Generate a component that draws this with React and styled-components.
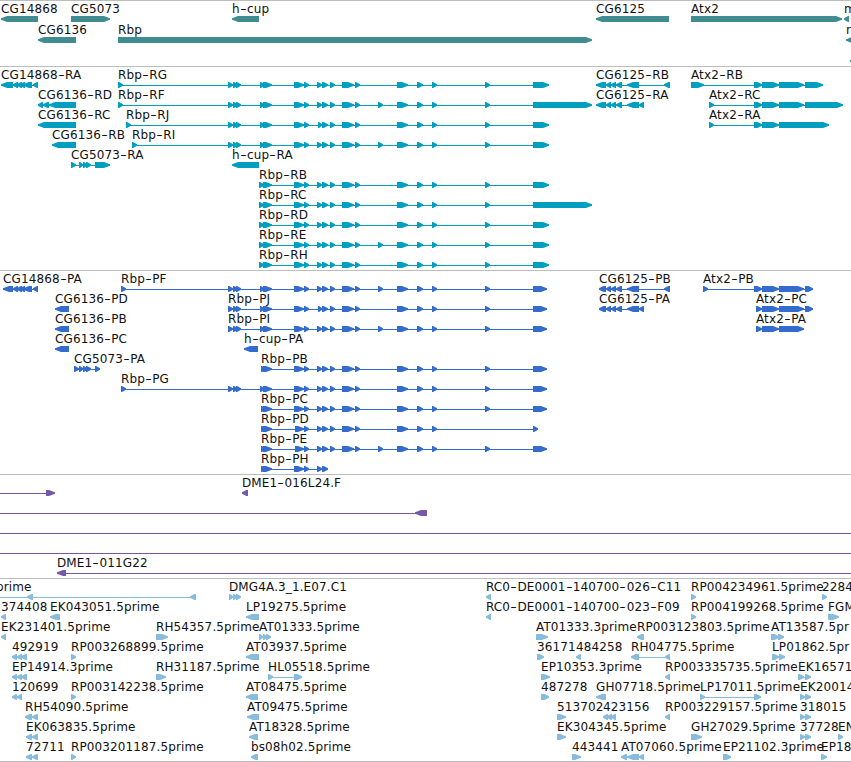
import React from "react";
import styled, { createGlobalStyle } from "styled-components";

const GlobalStyle = createGlobalStyle`
  html, body { margin: 0; padding: 0; background: #fff; overflow: hidden; }
`;

const Browser = styled.main`
  display: flex;
  flex-direction: column;
  width: 851px;
  height: 762px;
  overflow: hidden;
  background: #fff;
  color: #000;
  font-family: "DejaVu Sans", sans-serif;
  font-size: 12px;
  letter-spacing: 0.12px;
`;

const Track = styled.section`
  display: flex;
  flex-direction: column;
  flex: none;
  border-top: 1px solid #bdbdbd;
  padding: 1px 0 ${(p) => p.$end}px;
  color: ${(p) => p.$color};
`;

const Row = styled.div`
  position: relative;
  height: ${(p) => p.$pitch}px;
`;

const Label = styled.span`
  position: absolute;
  z-index: 1;
  top: 0;
  left: ${(p) => p.$x}px;
  line-height: 14px;
  white-space: pre;
  color: #111;
`;

const Dash = styled.span`
  display: inline-block;
  width: 7.3px;
  text-align: center;
  transform: scaleX(1.5);
`;

const Features = styled.svg`
  display: block;
  width: 851px;
  height: 6px;
  padding-top: 14px;
  overflow: visible;
  fill: currentColor;
`;

const Connector = styled.rect`
  shape-rendering: crispEdges;
`;

const Bottom = styled.div`
  height: 1px;
  background: #bdbdbd;
`;

// A feature is [direction, [start, end], [start, end], ...]; a connector joins its exons.
const R = (...exons) => ["R", ...exons];
const L = (...exons) => ["L", ...exons];
const LINE = (a, b) => ["-", [a, b]];

function exonPath([a, b], dir) {
  const width = b - a;
  const tip = width < 9 ? Math.min(width - 1, 4.5) : 6;
  const step = dir === "R" ? 1 : -1;
  const base = dir === "R" ? a : b;
  const point = dir === "R" ? b : a;
  const s = point - step * tip;
  const shoulder = point - step * (tip / 2 - 0.3);
  return `M${base} 0H${s}L${shoulder} 1.2L${point} 2.3V3.7L${shoulder} 4.8L${s} 6H${base}Z`;
}

function Feature({ data }) {
  const [dir, ...exons] = data;
  const from = exons[0][0];
  const to = exons[exons.length - 1][1];
  return (
    <g>
      {(exons.length > 1 || dir === "-") && (
        <Connector x={from} y="3" width={to - from} height="1" />
      )}
      {dir !== "-" && exons.map((e, i) => <path key={i} d={exonPath(e, dir)} />)}
    </g>
  );
}

function LabelText({ text }) {
  return text
    .split(/(-)/)
    .map((part, i) => (part === "-" ? <Dash key={i}>-</Dash> : part));
}

const row = (labels, ...features) => ({ labels, features });

// Rbp exon structure, shared by its transcripts and proteins
const head = [[228, 233], [233, 238], [236, 241]];
const rbp = ({ start = [], second = [260, 264], third = 294, fifth = 317, extra, end, skip }) =>
  R(
    ...start, second, [263, 272], [third, 304], [304, 309], [fifth, 322], [322, 328],
    [330, 335], [342, 354], [355, 360], ...(extra ? [[378, 383]] : []),
    [397, 408], [417, 423], [432, 437], ...(skip ? [] : [[485, 490]]), [533, end]
  );

const cg14868 = (s) => L([s, 13], [13, 18], [17, 22], [20, 25], [23, 32], [33, 38]);
const cg6125 = (s, last) => L([s, 606], [606, 611], [611, 616], [616, 622], [627, 639], last);
const triple = (x) => R([x, x + 4], [x + 4, x + 8], [x + 7, x + 12]);

const genes = [
  row([[1, "CG14868"], [71, "CG5073"], [232, "h-cup"], [596, "CG6125"], [691, "Atx2"], [844, "m"]],
    L([1, 38]), R([71, 110]), L([232, 259]), L([596, 669]), R([691, 842]), L([844, 849])),
  row([[38, "CG6136"], [118, "Rbp"], [846, "r"]], L([38, 76]), R([118, 592]), L([846, 856])),
  row([], L([850, 858])),
];

const transcripts = [
  row([[1, "CG14868-RA"], [118, "Rbp-RG"], [596, "CG6125-RB"], [691, "Atx2-RB"]],
    cg14868(1), rbp({ start: [[118, 123], ...head], end: 549 }), cg6125(596, [664, 670]),
    R([691, 704], [754, 762], [762, 779], [779, 804], [805, 823])),
  row([[38, "CG6136-RD"], [118, "Rbp-RF"], [596, "CG6125-RA"], [709, "Atx2-RC"]],
    L([38, 43], [43, 49], [49, 76]), rbp({ start: [[118, 123], ...head], extra: true, end: 592 }),
    cg6125(596, [639, 644]), R([709, 714], [754, 762], [762, 779], [779, 804], [805, 843])),
  row([[38, "CG6136-RC"], [126, "Rbp-RJ"], [709, "Atx2-RA"]],
    L([38, 76]), rbp({ start: [[126, 131], ...head], fifth: 318, end: 549 }),
    R([709, 714], [754, 762], [762, 779], [779, 829])),
  row([[52, "CG6136-RB"], [132, "Rbp-RI"]],
    L([52, 76]), rbp({ start: [[132, 137], ...head], extra: true, end: 549 })),
  row([[71, "CG5073-RA"], [232, "h-cup-RA"]],
    R([71, 76], [79, 83], [83, 87], [86, 91], [95, 110]), L([232, 259])),
  row([[259, "Rbp-RB"]], rbp({ second: [259, 264], end: 549 })),
  row([[259, "Rbp-RC"]], rbp({ second: [259, 264], end: 592 })),
  row([[259, "Rbp-RD"]], rbp({ second: [259, 264], end: 549 })),
  row([[259, "Rbp-RE"]], rbp({ second: [259, 264], extra: true, end: 549 })),
  row([[259, "Rbp-RH"]], rbp({ second: [259, 264], end: 549 })),
];

const proteins = [
  row([[3, "CG14868-PA"], [121, "Rbp-PF"], [599, "CG6125-PB"], [703, "Atx2-PB"]],
    cg14868(3), rbp({ start: [[121, 126], ...head], extra: true, end: 547 }), cg6125(599, [664, 670]),
    R([703, 708], [754, 762], [762, 779], [779, 804], [805, 813])),
  row([[55, "CG6136-PD"], [228, "Rbp-PJ"], [599, "CG6125-PA"], [756, "Atx2-PC"]],
    L([55, 69]), rbp({ start: head, fifth: 318, end: 547 }), cg6125(599, [639, 644]),
    R([756, 762], [762, 779], [779, 804], [805, 813])),
  row([[55, "CG6136-PB"], [228, "Rbp-PI"], [756, "Atx2-PA"]],
    L([55, 69]), rbp({ start: head, extra: true, end: 547 }), R([756, 762], [762, 779], [779, 804])),
  row([[55, "CG6136-PC"], [244, "h-cup-PA"]], L([55, 69]), L([244, 258])),
  row([[74, "CG5073-PA"], [261, "Rbp-PB"]],
    R([74, 79], [79, 83], [83, 87], [86, 91], [95, 100]), rbp({ second: [261, 266], end: 547 })),
  row([[121, "Rbp-PG"]], rbp({ start: [[121, 126], ...head], end: 547 })),
  row([[261, "Rbp-PC"]], rbp({ second: [261, 266], end: 547 })),
  row([[261, "Rbp-PD"]], rbp({ second: [261, 266], third: 295, end: 538, skip: true })),
  row([[261, "Rbp-PE"]], rbp({ second: [261, 266], third: 295, extra: true, end: 547 })),
  row([[261, "Rbp-PH"]], R([261, 266], [263, 272], [294, 304], [304, 309], [317, 322], [322, 328])),
];

const clones = [
  row([[242, "DME1-016L24.F"]], LINE(0, 46), R([46, 55]), L([242, 248])),
  row([], LINE(0, 416), L([415, 427])),
  row([], LINE(0, 851)),
  row([], LINE(0, 851)),
  row([[57, "DME1-011G22"]], L([57, 66]), LINE(66, 851)),
];

const ests = [
  row([[-4, "prime"], [229, "DMG4A.3_1.E07.C1"], [486, "RC0-DE0001-140700-026-C11"], [691, "RP004234961.5prime"], [822, "2284"]],
    LINE(0, 196), L([27, 33]), L([190, 196]), triple(229), L([486, 491]), R([691, 696]), R([822, 827])),
  row([[1, "374408"], [50, "EK043051.5prime"], [246, "LP19275.5prime"], [486, "RC0-DE0001-140700-023-F09"], [691, "RP004199268.5prime"], [828, "FGM"]],
    L([1, 6]), L([50, 60]), L([246, 259]), L([486, 491]), R([691, 696]), R([828, 839])),
  row([[1, "EK231401.5prime"], [156, "RH54357.5prime"], [259, "AT01333.5prime"], [536, "AT01333.3prime"], [637, "RP003123803.5prime"], [771, "AT13587.5pr"]],
    L([1, 6]), R([156, 168]), triple(259), R([536, 548]), L([637, 644]), R([771, 779], [778, 784])),
  row([[12, "492919"], [71, "RP003268899.5prime"], [246, "AT03937.5prime"], [537, "36171"], [576, "484258"], [631, "RH04775.5prime"], [772, "LP01862.5pr"]],
    L([12, 17], [17, 22], [21, 27]), R([71, 76]), L([246, 259]), R([537, 544]), L([576, 581]), L([631, 639], [665, 670]), R([772, 779], [779, 785])),
  row([[12, "EP14914.3prime"], [156, "RH31187.5prime"], [268, "HL05518.5prime"], [541, "EP10353.3prime"], [665, "RP003335735.5prime"], [798, "EK16571"]],
    L([12, 17], [17, 22], [21, 27]), R([156, 166]), R([268, 273], [294, 302]), R([541, 550]), L([665, 670]), R([798, 804], [805, 811])),
  row([[12, "120699"], [71, "RP003142238.5prime"], [246, "AT08475.5prime"], [541, "487278"], [596, "GH07718.5prime"], [700, "LP17011.5prime"], [800, "EK20014"]],
    L([12, 17], [17, 22]), R([71, 76]), L([246, 258]), R([541, 549]), L([596, 606]), R([700, 705], [754, 761]), R([800, 805], [805, 811])),
  row([[25, "RH54090.5prime"], [247, "AT09475.5prime"], [557, "513702"], [603, "423156"], [665, "RP003229157.5prime"], [800, "318015"]],
    L([25, 32], [32, 38]), L([247, 259]), R([557, 566]), L([603, 608], [607, 612], [611, 616]), L([665, 670]), R([800, 805], [805, 811])),
  row([[26, "EK063835.5prime"], [249, "AT18328.5prime"], [557, "EK304345.5prime"], [691, "GH27029.5prime"], [800, "37728"], [838, "EN"]],
    L([26, 32], [32, 38]), L([249, 258]), R([557, 566]), R([691, 702]), R([800, 805], [805, 811]), R([838, 843])),
  row([[26, "72711"], [71, "RP003201187.5prime"], [251, "bs08h02.5prime"], [572, "443441"], [621, "AT07060.5prime"], [723, "EP21102.3prime"], [821, "EP18"]],
    L([26, 32], [32, 38]), R([71, 76]), L([251, 258]), R([572, 581]), L([621, 627], [627, 639], [639, 644]), R([723, 731]), R([821, 827])),
];

const tracks = [
  { id: "genes", rows: genes, color: "#408c90", pitch: 21, end: 1 },
  { id: "transcripts", rows: transcripts, color: "#009fc0", pitch: 20, end: 2 },
  { id: "proteins", rows: proteins, color: "#336ccc", pitch: 20, end: 2 },
  { id: "clones", rows: clones, color: "#7657a9", pitch: 20, end: 2 },
  { id: "ests", rows: ests, color: "#87bcdc", pitch: 20, end: 1 },
];

export default function App() {
  return (
    <>
      <GlobalStyle />
      <Browser>
        {tracks.map((t) => (
          <Track key={t.id} $color={t.color} $end={t.end}>
            {t.rows.map((r, i) => (
              <Row key={i} $pitch={t.pitch}>
                {r.labels.map(([x, text]) => (
                  <Label key={x} $x={x}>
                    <LabelText text={text} />
                  </Label>
                ))}
                <Features>
                  {r.features.map((f, j) => (
                    <Feature key={j} data={f} />
                  ))}
                </Features>
              </Row>
            ))}
          </Track>
        ))}
        <Bottom />
      </Browser>
    </>
  );
}
